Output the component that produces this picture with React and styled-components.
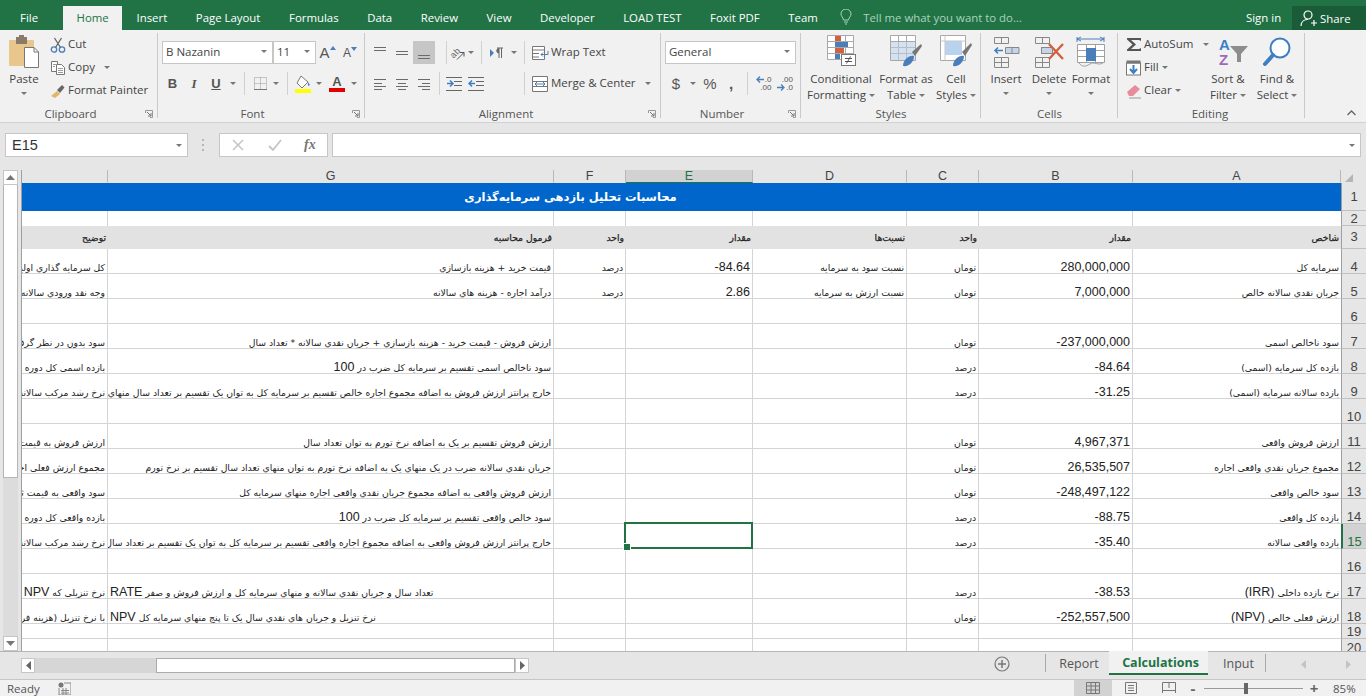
import React from "react"
import styled, { createGlobalStyle } from "styled-components"

const GREEN = "#217346"
const UI_FONT = `"Open Sans", "Noto Sans", sans-serif`
const GRID_LINE = "#d4d4d4"
const COLUMNS = "86px 446px 72px 127px 154px 72px 154px 208px 25px"

const GlobalStyle = createGlobalStyle`
    html, body { margin: 0; padding: 0; background: #e6e6e6; }
    * { box-sizing: border-box; }
`

const Page = styled.div`
    width: 1366px;
    height: 696px;
    overflow: hidden;
    display: flex;
    flex-direction: column;
    font-family: ${UI_FONT};
    color: #444;
`

/* title tabs */
const TabBar = styled.div`
    height: 30px;
    flex: none;
    background: ${GREEN};
    display: flex;
    align-items: flex-end;
    color: #fff;
    font-size: 11.4px;
`
const FileTab = styled.div`
    width: 58px;
    height: 24px;
    padding-left: 20px;
    line-height: 23px;
    margin-right: 5px;
`
const MenuTab = styled.div`
    height: 24px;
    line-height: 23px;
    padding: 0 ${p => p.$pad || 14.3}px;
    white-space: nowrap;
    background: ${p => (p.$active ? "#f1f1f1" : "transparent")};
    color: ${p => (p.$active ? GREEN : "#fff")};
`
const TellMe = styled.div`
    display: flex;
    align-items: center;
    gap: 11px;
    height: 24px;
    margin-left: 8px;
    padding-bottom: 2px;
    color: #a9d3bb;
    white-space: nowrap;
    flex: 1;
`
const SignIn = styled.div`
    height: 24px;
    line-height: 23px;
    width: 46px;
`
const ShareBtn = styled.div`
    width: 74px;
    height: 24px;
    display: flex;
    align-items: center;
    gap: 3px;
    padding-left: 8px;
    background: #1a5c38;
`

/* ribbon */
const Ribbon = styled.div`
    height: 93px;
    flex: none;
    display: flex;
    background: #f1f1f1;
    border-bottom: 1px solid #d2d2d2;
`
const Group = styled.div`
    width: ${p => p.$w}px;
    flex: none;
    display: flex;
    flex-direction: column;
    position: relative;
    &::after {
        content: "";
        position: absolute;
        right: 0;
        top: 3px;
        bottom: 4px;
        width: 1px;
        background: #c9c9c9;
    }
`
const GroupBody = styled.div`
    height: 76px;
    display: flex;
    padding-top: ${p => p.$top || 0}px;
    padding-left: ${p => p.$left || 0}px;
`
const GroupLabel = styled.div`
    height: 16px;
    line-height: 15px;
    text-align: center;
    font-size: 11.5px;
    color: #555;
    padding-right: ${p => p.$shift || 0}px;
    position: relative;
`
const Launcher = styled.svg`
    position: absolute;
    right: 5px;
    top: 4px;
    width: 8px;
    height: 8px;
`
const RibbonEnd = styled.div`
    flex: 1;
    display: flex;
    align-items: flex-end;
    justify-content: flex-end;
    padding: 0 10px 6px 0;
`
const Stack = styled.div`
    display: flex;
    flex-direction: column;
    width: ${p => (p.$w ? `${p.$w}px` : "auto")};
    gap: ${p => p.$gap || 0}px;
    padding-top: ${p => p.$top || 0}px;
`
const ToolRow = styled.div`
    display: flex;
    align-items: center;
    height: 23px;
    font-size: 11.5px;
    white-space: nowrap;
`
const ToolText = styled.span`
    margin-bottom: 2px;
`
const Tool = styled.div`
    width: ${p => p.$w}px;
    height: 23px;
    flex: none;
    display: flex;
    align-items: center;
    justify-content: center;
    background: ${p => (p.$on ? "#c6c6c6" : "transparent")};
`
const Glyph = styled.span`
    font-family: ${p => (p.$serif ? `"Liberation Serif", serif` : `"Liberation Sans", sans-serif`)};
    font-size: ${p => p.$size || 13}px;
    line-height: ${p => p.$size || 13}px;
    font-weight: ${p => (p.$bold ? 700 : 400)};
    font-style: ${p => (p.$italic ? "italic" : "normal")};
    text-decoration: ${p => (p.$under ? "underline" : "none")};
    color: ${p => p.$color || "#555"};
`
const Sep = styled.div`
    width: ${p => p.$w}px;
    margin-left: ${p => p.$ml || 0}px;
    height: 23px;
    flex: none;
    display: flex;
    justify-content: center;
    &::before {
        content: "";
        width: 1px;
        background: #d0d0d0;
    }
`
const Spacer = styled.div`
    width: ${p => p.$w}px;
    flex: none;
`
const CaretMark = styled.i`
    display: inline-block;
    width: 0;
    height: 0;
    border-left: 3px solid transparent;
    border-right: 3px solid transparent;
    border-top: 3px solid #777;
    margin-left: ${p => p.$ml || 0}px;
    margin-top: ${p => p.$mt || 0}px;
    vertical-align: middle;
`
const SelectBox = styled.div`
    width: ${p => p.$w}px;
    height: 23px;
    flex: none;
    background: #fff;
    border: 1px solid #c6c6c6;
    display: flex;
    align-items: center;
    justify-content: space-between;
    padding: 0 5px 2px 3px;
    font-size: 11.5px;
    color: #444;
`
const LargeBtn = styled.div`
    width: ${p => p.$w}px;
    flex: none;
    display: flex;
    flex-direction: column;
    align-items: center;
    padding-top: 3px;
    font-size: 11.5px;
    line-height: 16px;
    white-space: nowrap;
`
const LargeIcon = styled.div`
    height: 38px;
    display: flex;
    align-items: center;
    justify-content: center;
`
const DecimalWrap = styled.div`
    display: flex;
    flex-direction: column;
    align-items: flex-end;
    font-family: "Liberation Sans", sans-serif;
    font-size: 8px;
    line-height: 8px;
    color: #555;
`
const DecimalLine = styled.div`
    display: flex;
    align-items: center;
    gap: 1px;
`
const FontColorWrap = styled.span`
    display: flex;
    flex-direction: column;
    align-items: center;
`

/* formula bar */
const FormulaBar = styled.div`
    height: 47px;
    flex: none;
    background: #e6e6e6;
    display: flex;
    padding: 10px 5px 0;
`
const NameBox = styled.div`
    width: 183px;
    height: 24px;
    background: #fff;
    border: 1px solid #c6c6c6;
    display: flex;
    align-items: center;
    justify-content: space-between;
    padding: 0 5px 0 6px;
    font-family: "Liberation Sans", sans-serif;
    font-size: 14.5px;
    color: #333;
`
const Grip = styled.div`
    width: 31px;
    height: 24px;
    display: flex;
    align-items: center;
    justify-content: center;
`
const FxBox = styled.div`
    width: 109px;
    height: 24px;
    background: #fff;
    border: 1px solid #c6c6c6;
    display: flex;
    align-items: center;
    justify-content: space-around;
    margin-right: 4px;
`
const FormulaInput = styled.div`
    flex: 1;
    height: 24px;
    background: #fff;
    border: 1px solid #c6c6c6;
    display: flex;
    align-items: center;
    justify-content: flex-end;
    padding-right: 5px;
`

/* sheet */
const SheetArea = styled.div`
    height: 482px;
    flex: none;
    display: flex;
    border-bottom: 1px solid #b5b5b5;
`
const VScroll = styled.div`
    width: 22px;
    flex: none;
    padding: 0 3px;
    display: flex;
    flex-direction: column;
    background: #e6e6e6;
    border-right: 1px solid #9f9f9f;
`
const ScrollArrow = styled.div`
    height: ${p => p.$h || 15}px;
    width: ${p => p.$w || "auto"};
    flex: none;
    background: #fff;
    border: 1px solid #c6c6c6;
    display: flex;
    align-items: center;
    justify-content: center;
`
const VThumb = styled.div`
    height: 293px;
    flex: none;
    background: #fff;
    border: 1px solid #b5b5b5;
    border-top: 0;
`
const VTrack = styled.div`
    flex: 1;
    background: #dcdcdc;
`
const SheetGrid = styled.div`
    flex: 1;
    min-width: 0;
    display: flex;
    flex-direction: column;
    overflow: hidden;
    background: #fff;
`
const HeadRow = styled.div`
    height: 13px;
    flex: none;
    display: grid;
    grid-template-columns: ${COLUMNS};
    background: #e6e6e6;
`
const ColHead = styled.div`
    height: 13px;
    line-height: 13px;
    text-align: center;
    overflow: hidden;
    font-family: "Liberation Sans", sans-serif;
    font-size: 12.5px;
    color: ${p => (p.$on ? GREEN : "#444")};
    background: ${p => (p.$on ? "#d2d2d2" : "transparent")};
    border-right: 1px solid #b9b9b9;
    border-bottom: 1px solid ${p => (p.$on ? GREEN : "transparent")};
`
const Corner = styled.div`
    display: flex;
    align-items: flex-end;
    padding: 0 0 1px 4px;
    background: #e6e6e6;
`
const Row = styled.div`
    height: ${p => p.$h}px;
    flex: none;
    display: grid;
    grid-template-columns: ${COLUMNS};
    background: ${p => p.$bg || "#fff"};
`
const Cell = styled.div`
    min-width: 0;
    overflow: hidden;
    white-space: nowrap;
    display: flex;
    align-items: ${p => (p.$center ? "center" : "flex-end")};
    justify-content: flex-end;
    direction: ltr;
    padding: 0 2px 0 2px;
    font-family: "Liberation Sans", "DejaVu Sans", sans-serif;
    font-size: 12.5px;
    line-height: 11px;
    color: #222;
    border-bottom: ${p => (p.$plain || p.$noLine ? "0" : `1px solid ${GRID_LINE}`)};
    border-right: ${p => (p.$plain ? "0" : `1px solid ${GRID_LINE}`)};
    &:nth-child(8) {
        border-right: 0;
    }
`
const Farsi = styled.span`
    display: block;
    direction: ${p => (p.$ltr ? "ltr" : "rtl")};
    flex: none;
    font-family: "DejaVu Sans", sans-serif;
    font-size: 9.25px;
    -webkit-text-stroke: ${p => (p.$strong ? "0.25px" : "0")};
    margin-right: ${p => (p.$ltr ? "auto" : "0")};
`
const Latin = styled.span`
    font-family: "Liberation Sans", sans-serif;
    font-size: 12.5px;
`
const SelectedCell = styled(Cell)`
    position: relative;
    overflow: visible;
    &::after {
        content: "";
        position: absolute;
        left: -2px;
        top: -2px;
        right: -1px;
        bottom: -1px;
        border: 2px solid ${GREEN};
        z-index: 2;
    }
    &::before {
        content: "";
        position: absolute;
        left: -3px;
        bottom: -3px;
        width: 6px;
        height: 6px;
        background: ${GREEN};
        border: 1px solid #fff;
        z-index: 3;
    }
`
const RowHead = styled.div`
    display: flex;
    align-items: ${p => (p.$center ? "center" : "flex-end")};
    justify-content: center;
    font-family: "Liberation Sans", sans-serif;
    font-size: 13px;
    line-height: 12px;
    overflow: hidden;
    color: ${p => (p.$on ? GREEN : "#444")};
    background: ${p => (p.$on ? "#d2d2d2" : "#e6e6e6")};
    border-left: ${p => (p.$on ? `2px solid ${GREEN}` : "1px solid #9f9f9f")};
    border-bottom: 1px solid #c0c0c0;
`
const TitleRow = styled.div`
    height: 28px;
    flex: none;
    display: grid;
    grid-template-columns: 1fr 25px;
`
const TitleCell = styled.div`
    background: #0066cc;
    color: #fff;
    display: flex;
    align-items: center;
    justify-content: center;
    padding: 0 222px 0 0;
    direction: rtl;
    font-family: "DejaVu Sans", sans-serif;
    font-size: 11.5px;
    font-weight: 700;
`

/* sheet tabs */
const SheetBar = styled.div`
    height: 28px;
    flex: none;
    display: flex;
    background: #e6e6e6;
    border-bottom: 1px solid #c6c6c6;
    font-size: 12.5px;
    color: #555;
`
const HScroll = styled.div`
    width: 508px;
    height: 15px;
    margin: 6px 0 0 21px;
    display: flex;
    flex: none;
`
const HTrack = styled.div`
    width: 121px;
    background: #d6d6d6;
`
const HThumb = styled.div`
    width: 359px;
    background: #fff;
    border: 1px solid #ababab;
`
const AddSheet = styled.div`
    width: 16px;
    height: 16px;
    margin: 4px 0 0 465px;
    flex: none;
`
const TabSep = styled.div`
    width: 1px;
    height: 18px;
    margin: 2px 0 0 ${p => p.$ml || 0}px;
    background: #a8a8a8;
    flex: none;
`
const SheetTab = styled.div`
    width: ${p => p.$w}px;
    height: 24px;
    line-height: 23px;
    text-align: center;
    flex: none;
    padding-left: ${p => p.$shift || 0}px;
    font-weight: ${p => (p.$active ? 700 : 400)};
    color: ${p => (p.$active ? GREEN : "#555")};
    background: ${p => (p.$active ? "#f1f1f1" : "transparent")};
    border-bottom: ${p => (p.$active ? `2px solid ${GREEN}` : "0")};
    margin-top: ${p => (p.$active ? -1 : 0)}px;
`
const TabNav = styled.div`
    margin-left: 35px;
    width: 50px;
    display: flex;
    justify-content: space-between;
    padding-top: 8px;
    flex: none;
`

/* status bar */
const StatusBar = styled.div`
    height: 16px;
    flex: none;
    display: flex;
    align-items: center;
    background: #f1f1f1;
    font-size: 11.5px;
    color: #555;
    padding-left: 7px;
`
const ReadyText = styled.div`
    width: 51px;
`
const ViewBtn = styled.div`
    width: ${p => p.$w}px;
    height: 16px;
    flex: none;
    display: flex;
    align-items: center;
    justify-content: center;
    background: ${p => (p.$on ? "#d2d2d2" : "transparent")};
`
const ZoomSlider = styled.div`
    width: 99px;
    height: 1px;
    margin: 0 6px;
    flex: none;
    background: #9a9a9a;
    display: flex;
    align-items: center;
    padding-left: 40px;
`
const ZoomThumb = styled.div`
    width: 4px;
    height: 11px;
    background: #666;
    flex: none;
`
const ZoomSign = styled.div`
    width: 10px;
    text-align: center;
    font-size: 15px;
    font-weight: 700;
    color: #666;
    line-height: 14px;
    flex: none;
`
const ZoomValue = styled.div`
    margin-left: 14px;
    color: #555;
`

const Ico = ({ w, h, children }) => (
    <svg width={w} height={h} viewBox={`0 0 ${w} ${h}`} fill="none">{children}</svg>
)

const Lines = ({ rows, color = "#6b6b6b" }) => (
    <Ico w={16} h={16}>
        {rows.map(([x1, x2, y], i) => (
            <path key={i} d={`M${x1} ${y}.5H${x2}`} stroke={color} />
        ))}
    </Ico>
)

const Launch = () => (
    <Launcher viewBox="0 0 8 8" fill="none">
        <path d="M.5 3V.5H7.5V7.5H5" stroke="#999" />
        <path d="M2 2L6 6M6 3V6H3" stroke="#777" />
    </Launcher>
)

const PasteIcon = () => (
    <Ico w={32} h={35}>
        <rect x="1" y="5" width="25" height="26" rx="1" fill="#e8c68c" />
        <rect x="8" y="2" width="11" height="7" fill="#8a7b68" />
        <rect x="11" y="0" width="5" height="4" fill="#8a7b68" />
        <path d="M16.5 12.5H26L30.5 17V32.5H16.5Z" fill="#fff" stroke="#777" />
        <path d="M26 12.5V17H30.5" stroke="#777" />
    </Ico>
)
const CutIcon = () => (
    <Ico w={16} h={16}>
        <circle cx="4" cy="12.5" r="2.7" stroke="#4a7ebb" strokeWidth="1.3" />
        <circle cx="12" cy="12.5" r="2.7" stroke="#4a7ebb" strokeWidth="1.3" />
        <path d="M5.5 10.5L11.5 1M10.5 10.5L4.5 1" stroke="#666" strokeWidth="1.3" />
    </Ico>
)
const CopyIcon = () => (
    <Ico w={16} h={16}>
        <path d="M1.5 1.5H7.5V11.5H1.5Z" fill="#fff" stroke="#777" />
        <path d="M6.5 4.5H11.5L14.5 7.5V14.5H6.5Z" fill="#fff" stroke="#777" />
        <path d="M8 8.5H13M8 10.5H13M8 12.5H13M3 4.5H6M3 6.5H5" stroke="#999" />
    </Ico>
)
const PainterIcon = () => (
    <Ico w={16} h={16}>
        <path d="M1 13L7 8L10 11L5 15Z" fill="#e3b566" />
        <path d="M7 7L12 2L14.5 4.5L10 10Z" fill="#666" />
    </Ico>
)
const GrowIcon = ({ size, up }) => (
    <span>
        <Glyph $size={size}>A</Glyph>
        <svg width="6" height="4" viewBox="0 0 6 4" style={{ verticalAlign: size > 13 ? 8 : 6 }}>
            <path d={up ? "M0 4L3 0L6 4Z" : "M0 0L3 4L6 0Z"} fill="#4a7ebb" />
        </svg>
    </span>
)
const BorderIcon = () => (
    <Ico w={15} h={15}>
        <path d="M1.5 1.5H13.5V13.5H1.5ZM7.5 1.5V13.5M1.5 7.5H13.5" stroke="#999" strokeDasharray="1 1" />
        <path d="M1 13.5H14" stroke="#777" />
    </Ico>
)
const FillIcon = () => (
    <Ico w={18} h={18}>
        <path d="M7 1L14 7L8 13L3 8Z" fill="#fff" stroke="#777" />
        <path d="M14 7L16 10L14 11Z" fill="#4a7ebb" />
        <rect x="1" y="14" width="16" height="4" fill="#ffff00" />
    </Ico>
)
const FontColorIcon = () => (
    <FontColorWrap>
        <Glyph $size={13} $bold>A</Glyph>
        <svg width="16" height="4"><rect width="16" height="4" fill="#e00000" /></svg>
    </FontColorWrap>
)
const OrientIcon = () => (
    <Ico w={16} h={16}>
        <text x="0" y="11" fontFamily="Liberation Sans, sans-serif" fontSize="9" fill="#666" transform="rotate(-45 5 8)">ab</text>
        <path d="M7 14.5L14 7.5M14 7.5V11.5M14 7.5H10" stroke="#555" />
    </Ico>
)
const RtlIcon = () => (
    <Ico w={16} h={14}>
        <path d="M1 3L5 7L1 11Z" fill="#4a7ebb" />
        <path d="M8 2H14M10 2V12M12.5 2V12" stroke="#666" />
        <path d="M10 2.5A2 2 0 0 0 10 7" fill="#666" stroke="#666" />
    </Ico>
)
const IndentIcon = ({ out }) => (
    <Ico w={16} h={14}>
        <path d="M0 .5H16M8 4.5H16M8 8.5H16M0 13.5H16" stroke="#666" />
        <path d={out ? "M7 6.5H1M4 3.5L1 6.5L4 9.5" : "M1 6.5H7M4 3.5L7 6.5L4 9.5"} stroke="#3c7fc4" strokeWidth="1.5" />
    </Ico>
)
const WrapIcon = () => (
    <Ico w={18} h={16}>
        <path d="M1.5 1.5H13.5V14.5H1.5Z" fill="#fff" stroke="#777" />
        <path d="M1 5H13M1 8.5H8M1 12H8" stroke="#777" />
        <path d="M17 6V9.5H10M12 7.5L10 9.5L12 11.5" stroke="#4a7ebb" />
    </Ico>
)
const MergeIcon = () => (
    <Ico w={16} h={16}>
        <path d="M.5 .5H15.5V15.5H.5ZM.5 5.5H15.5M.5 10.5H15.5" stroke="#777" fill="#fff" />
        <path d="M3 8H13M5 6L3 8L5 10M11 6L13 8L11 10" stroke="#4a7ebb" />
    </Ico>
)
const DecArrow = ({ left }) => (
    <svg width="8" height="7" viewBox="0 0 8 7" fill="none">
        <path d={left ? "M8 3.5H1M4 .5L1 3.5L4 6.5" : "M0 3.5H7M4 .5L7 3.5L4 6.5"} stroke="#4a7ebb" strokeWidth="1.3" />
    </svg>
)
const DecimalMore = () => (
    <DecimalWrap>
        <DecimalLine><DecArrow left />.0</DecimalLine>
        <DecimalLine>.00</DecimalLine>
    </DecimalWrap>
)
const DecimalLess = () => (
    <DecimalWrap>
        <DecimalLine>.00</DecimalLine>
        <DecimalLine><DecArrow />.0</DecimalLine>
    </DecimalWrap>
)
const CondIcon = () => (
    <Ico w={30} h={36}>
        <path d="M1.5 1.5H27.5V25.5H1.5ZM10.5 1.5V25.5M19.5 1.5V25.5M1.5 7.5H27.5M1.5 13.5H27.5M1.5 19.5H27.5" stroke="#a8a8a8" fill="#fff" />
        <rect x="9" y="2" width="6" height="5" fill="#d2603f" />
        <rect x="9" y="8" width="13" height="5" fill="#4a7ebb" />
        <rect x="9" y="14" width="9" height="5" fill="#d2603f" />
        <rect x="9" y="20" width="5" height="5" fill="#4a7ebb" />
        <rect x="15.5" y="20.5" width="14" height="11" fill="#fff" stroke="#777" />
        <path d="M19 24.5H26M19 27.5H26M24.5 22.5L20.5 29.5" stroke="#555" />
    </Ico>
)
const TableIcon = () => (
    <Ico w={34} h={36}>
        <path d="M1.5 1.5H26.5V26.5H1.5ZM9.5 1.5V26.5M17.5 1.5V26.5M1.5 7.5H26.5M1.5 13.5H26.5M1.5 19.5H26.5" stroke="#a8a8a8" fill="#fff" />
        <rect x="2" y="8" width="24" height="18" fill="#b9cde5" opacity=".6" />
        <path d="M23 18L32 10L33 12L26 22Z" fill="#777" />
        <path d="M14 32C14 26 20 21 25 22C25 28 20 33 14 32Z" fill="#4a7ebb" />
    </Ico>
)
const StylesIcon = () => (
    <Ico w={34} h={36}>
        <path d="M1.5 1.5H26.5V26.5H1.5Z" stroke="#a8a8a8" fill="#fff" />
        <rect x="6" y="7" width="17" height="14" fill="#b9d3ee" />
        <path d="M1.5 7H26.5M6 1.5V26.5" stroke="#c8c8c8" />
        <path d="M23 18L32 9L33 11L26 22Z" fill="#777" />
        <path d="M14 32C14 26 20 21 25 22C25 28 20 33 14 32Z" fill="#4a7ebb" />
    </Ico>
)
const CellsInsertIcon = () => (
    <Ico w={28} h={32}>
        <path d="M2.5 1.5H16.5V7.5H2.5ZM9.5 1.5V7.5M2.5 21.5H16.5V31.5H2.5ZM9.5 21.5V31.5M2.5 26.5H16.5" stroke="#888" />
        <path d="M13.5 11.5H27V17.5H13.5ZM20 11.5V17.5" stroke="#888" fill="#c5d4e8" />
        <path d="M11 14.5H3M6 11.5L3 14.5L6 17.5" stroke="#3c7fc4" strokeWidth="1.5" />
    </Ico>
)
const CellsDeleteIcon = () => (
    <Ico w={32} h={32}>
        <path d="M2.5 1.5H16.5V7.5H2.5ZM9.5 1.5V7.5M2.5 21.5H16.5V31.5H2.5ZM9.5 21.5V31.5M2.5 26.5H16.5" stroke="#888" />
        <rect x="8.5" y="11.5" width="11" height="6" stroke="#888" fill="#c5d4e8" />
        <path d="M16 8L30 23M30 8L16 23" stroke="#d2603f" strokeWidth="2.4" />
    </Ico>
)
const CellsFormatIcon = () => (
    <Ico w={30} h={32}>
        <path d="M1 3H28M1 1V6M28 1V6M5 1L1 3L5 5M24 1L28 3L24 5" stroke="#4a7ebb" />
        <path d="M1.5 8.5H28.5V26.5H1.5ZM10.5 8.5V26.5M19.5 8.5V26.5M1.5 14.5H28.5M1.5 20.5H28.5" stroke="#a0a0a0" fill="#fff" />
        <rect x="10" y="12" width="10" height="13" fill="#4a7ebb" />
        <path d="M3 27C6 31 9 31 14 28C18 25 22 30 27 27" stroke="#a0a0a0" />
    </Ico>
)
const SigmaIcon = () => (
    <Ico w={16} h={15}>
        <path d="M1 1H15V4L13 3H5L10 7.5L5 12H13L15 11V14H1V12.5L6.5 7.5L1 2.5Z" fill="#555" />
    </Ico>
)
const FillDownIcon = () => (
    <Ico w={16} h={16}>
        <rect x=".5" y="3" width="14" height="12" fill="#fff" stroke="#777" />
        <rect x=".5" y=".5" width="14" height="3" fill="#777" />
        <path d="M7.5 5V12M4 9L7.5 13L11 9" stroke="#3c7fc4" strokeWidth="2" />
    </Ico>
)
const EraserIcon = () => (
    <Ico w={16} h={16}>
        <path d="M1 9L9 2L14 6L7 13H3Z" fill="#e88b9a" />
        <path d="M3 15H15" stroke="#999" />
    </Ico>
)
const SortIcon = () => (
    <Ico w={42} h={30}>
        <text x="12" y="13" fontFamily="Liberation Sans, sans-serif" fontWeight="700" fontSize="15" fill="#3c7fc4">A</text>
        <text x="12" y="28" fontFamily="Liberation Sans, sans-serif" fontWeight="700" fontSize="15" fill="#9e6ab8">Z</text>
        <path d="M23 9H41L34 17V25H30V17Z" fill="#8d8d8d" />
    </Ico>
)
const FindIcon = () => (
    <Ico w={30} h={32}>
        <circle cx="18" cy="12" r="9.5" stroke="#3c7fc4" strokeWidth="2" fill="#fff" />
        <path d="M11 19L3 28" stroke="#3c7fc4" strokeWidth="4" strokeLinecap="round" />
    </Ico>
)
const BulbIcon = () => (
    <Ico w={12} h={16}>
        <path d="M3.5 11C3 8 1 7.5 1 5A5 5 0 0 1 11 5C11 7.5 9 8 8.5 11ZM4 13H8M5 15H7" stroke="#a9d3bb" />
    </Ico>
)
const ShareIcon = () => (
    <Ico w={17} h={17}>
        <circle cx="8" cy="5" r="4" stroke="#fff" strokeWidth="1.2" />
        <path d="M1 16C1 11 5 9.5 8 9.5M11 13H17M14 10V16" stroke="#fff" strokeWidth="1.2" />
    </Ico>
)
const ArrowUp = () => <Ico w={9} h={5}><path d="M0 5L4.5 0L9 5Z" fill="#777" /></Ico>
const ArrowDown = () => <Ico w={9} h={5}><path d="M0 0L4.5 5L9 0Z" fill="#777" /></Ico>
const ArrowSide = ({ left, color = "#666" }) => (
    <Ico w={5} h={9}><path d={left ? "M5 0L0 4.5L5 9Z" : "M0 0L5 4.5L0 9Z"} fill={color} /></Ico>
)

const TABS = ["Insert", "Page Layout", "Formulas", "Data", "Review", "View", "Developer", "LOAD TEST", "Foxit PDF", "Team"]
const HEADERS = ["", "G", "F", "E", "D", "C", "B", "A"]

const latin = t => <Latin>{t}</Latin>

// order of a row: H G F E D C B A, a cell is text (farsi) or { n } (a number)
const ROWS = [
    { n: 2, h: 15, noLine: true, cells: [] },
    { n: 3, h: 23, band: true, cells: ["توضیح", "فرمول محاسبه", "واحد", "مقدار", "نسبت‌ها", "واحد", "مقدار", "شاخص"] },
    { n: 4, h: 25, cells: ["کل سرمایه گذاري اولیه", "قیمت خرید + هزینه بازسازي", "درصد", { n: "-84.64" }, "نسبت سود به سرمایه", "تومان", { n: "280,000,000" }, "سرمایه کل"] },
    { n: 5, h: 25, cells: ["وجه نقد ورودي سالانه", "درآمد اجاره - هزینه هاي سالانه", "درصد", { n: "2.86" }, "نسبت ارزش به سرمایه", "تومان", { n: "7,000,000" }, "جریان نقدي سالانه خالص"] },
    { n: 6, h: 25, cells: [] },
    { n: 7, h: 25, cells: ["سود بدون در نظر گرفتن", "ارزش فروش - قیمت خرید - هزینه بازسازي + جریان نقدي سالانه * تعداد سال", "", "", "", "تومان", { n: "-237,000,000" }, "سود ناخالص اسمی"] },
    { n: 8, h: 25, cells: ["بازده اسمی کل دوره", <>سود ناخالص اسمی تقسیم بر سرمایه کل ضرب در {latin("100")}</>, "", "", "", "درصد", { n: "-84.64" }, "بازده کل سرمایه (اسمی)"] },
    { n: 9, h: 25, cells: ["نرخ رشد مرکب سالانه", "خارج پرانتز ارزش فروش به اضافه مجموع اجاره خالص تقسیم بر سرمایه کل به توان یک تقسیم بر تعداد سال منهاي یک", "", "", "", "درصد", { n: "-31.25" }, "بازده سالانه سرمایه (اسمی)"] },
    { n: 10, h: 25, cells: [] },
    { n: 11, h: 25, cells: ["ارزش فروش به قیمت ثابت", "ارزش فروش تقسیم بر یک به اضافه نرخ تورم به توان تعداد سال", "", "", "", "تومان", { n: "4,967,371" }, "ارزش فروش واقعی"] },
    { n: 12, h: 25, cells: ["مجموع ارزش فعلی اجاره", "جریان نقدي سالانه ضرب در یک منهاي یک به اضافه نرخ تورم به توان منهاي تعداد سال تقسیم بر نرخ تورم", "", "", "", "تومان", { n: "26,535,507" }, "مجموع جریان نقدي واقعی اجاره"] },
    { n: 13, h: 25, cells: ["سود واقعی به قیمت ثابت", "ارزش فروش واقعی به اضافه مجموع جریان نقدي واقعی اجاره منهاي سرمایه کل", "", "", "", "تومان", { n: "-248,497,122" }, "سود خالص واقعی"] },
    { n: 14, h: 25, cells: ["بازده واقعی کل دوره (درصد)", <>سود خالص واقعی تقسیم بر سرمایه کل ضرب در {latin("100")}</>, "", "", "", "درصد", { n: "-88.75" }, "بازده کل واقعی"] },
    { n: 15, h: 25, selected: true, cells: ["نرخ رشد مرکب سالانه", "خارج پرانتز ارزش فروش واقعی به اضافه مجموع اجاره واقعی تقسیم بر سرمایه کل به توان یک تقسیم بر تعداد سال", "", "", "", "درصد", { n: "-35.40" }, "بازده واقعی سالانه"] },
    { n: 16, h: 25, cells: [] },
    { n: 17, h: 25, cells: [<>نرخ تنزیلی که {latin("NPV")} را صفر می‌کند</>, { ltr: <>{latin("RATE")} تعداد سال و جریان نقدي سالانه و منهاي سرمایه کل و ارزش فروش و صفر</> }, "", "", "", "درصد", { n: "-38.53" }, <>نرخ بازده داخلی {latin("(IRR)")}</>] },
    { n: 18, h: 25, cells: ["با نرخ تنزیل (هزینه فرصت)", { ltr: <>{latin("NPV")} نرخ تنزیل و جریان هاي نقدي سال یک تا پنج منهاي سرمایه کل</> }, "", "", "", "تومان", { n: "-252,557,500" }, <>ارزش فعلی خالص {latin("(NPV)")}</>] },
    { n: 19, h: 15, cells: [] },
    { n: 20, h: 16, cells: [] },
]

const cellContent = (cell, band) => {
    if (!cell) return null
    if (cell.n) return cell.n
    if (cell.ltr) return <Farsi $ltr>{cell.ltr}</Farsi>
    return <Farsi $strong={band}>{cell}</Farsi>
}

const SheetRow = ({ row }) => (
    <Row $h={row.h} $bg={row.band ? "#e2e2e2" : "#fff"}>
        {HEADERS.map((col, i) => {
            const Kind = row.selected && col === "E" ? SelectedCell : Cell
            return (
                <Kind key={col || "H"} $plain={row.band} $center={row.band} $noLine={row.noLine}>
                    {cellContent(row.cells[i], row.band)}
                </Kind>
            )
        })}
        <RowHead $on={row.selected} $center={row.band}>{row.n}</RowHead>
    </Row>
)

const RibbonTabs = () => (
    <TabBar>
        <FileTab>File</FileTab>
        <MenuTab $active $pad={13.5}>Home</MenuTab>
        {TABS.map(t => <MenuTab key={t}>{t}</MenuTab>)}
        <TellMe><BulbIcon />Tell me what you want to do...</TellMe>
        <SignIn>Sign in</SignIn>
        <ShareBtn><ShareIcon />Share</ShareBtn>
    </TabBar>
)

const Home = () => (
    <Ribbon>
        <Group $w={158}>
            <GroupBody>
                <LargeBtn $w={48}>
                    <LargeIcon><PasteIcon /></LargeIcon>
                    Paste
                    <CaretMark $mt={5} />
                </LargeBtn>
                <Stack $top={3}>
                    <ToolRow><Tool $w={20}><CutIcon /></Tool><ToolText>Cut</ToolText></ToolRow>
                    <ToolRow><Tool $w={20}><CopyIcon /></Tool><ToolText>Copy</ToolText><CaretMark $ml={9} /></ToolRow>
                    <ToolRow><Tool $w={20}><PainterIcon /></Tool><ToolText>Format Painter</ToolText></ToolRow>
                </Stack>
            </GroupBody>
            <GroupLabel $shift={17}>Clipboard<Launch /></GroupLabel>
        </Group>

        <Group $w={207}>
            <GroupBody $top={11} $left={4}>
                <Stack $gap={8}>
                    <ToolRow>
                        <SelectBox $w={111}>B Nazanin<CaretMark /></SelectBox>
                        <SelectBox $w={43}>11<CaretMark /></SelectBox>
                        <Tool $w={23}><GrowIcon size={15} up /></Tool>
                        <Tool $w={22}><GrowIcon size={12} /></Tool>
                    </ToolRow>
                    <ToolRow>
                        <Tool $w={21}><Glyph $bold>B</Glyph></Tool>
                        <Tool $w={22}><Glyph $italic $serif $bold>I</Glyph></Tool>
                        <Tool $w={22}><Glyph $bold $under>U</Glyph></Tool>
                        <Tool $w={12}><CaretMark /></Tool>
                        <Sep $w={10} />
                        <Tool $w={22}><BorderIcon /></Tool>
                        <Tool $w={10}><CaretMark /></Tool>
                        <Sep $w={12} />
                        <Tool $w={20}><FillIcon /></Tool>
                        <Tool $w={12}><CaretMark /></Tool>
                        <Tool $w={24}><FontColorIcon /></Tool>
                        <Tool $w={10}><CaretMark /></Tool>
                    </ToolRow>
                </Stack>
            </GroupBody>
            <GroupLabel $shift={18}>Font<Launch /></GroupLabel>
        </Group>

        <Group $w={296}>
            <GroupBody $top={11} $left={4}>
                <Stack $gap={8}>
                    <ToolRow>
                        <Tool $w={22}><Lines rows={[[2, 14, 2], [2, 14, 5]]} /></Tool>
                        <Tool $w={22}><Lines rows={[[2, 14, 6], [2, 14, 9]]} /></Tool>
                        <Tool $w={22} $on><Lines rows={[[2, 14, 10], [2, 14, 13]]} /></Tool>
                        <Sep $w={8} $ml={7} />
                        <Tool $w={16}><OrientIcon /></Tool>
                        <Tool $w={10}><CaretMark /></Tool>
                        <Sep $w={10} />
                        <Tool $w={22}><RtlIcon /></Tool>
                        <Tool $w={12}><CaretMark /></Tool>
                        <Sep $w={8} />
                        <Tool $w={23}><WrapIcon /></Tool>
                        <ToolText>Wrap Text</ToolText>
                    </ToolRow>
                    <ToolRow>
                        <Tool $w={22}><Lines rows={[[2, 14, 3], [2, 10, 7], [2, 14, 10], [2, 10, 13]]} /></Tool>
                        <Tool $w={22}><Lines rows={[[2, 14, 3], [4, 12, 7], [2, 14, 10], [4, 12, 13]]} /></Tool>
                        <Tool $w={22}><Lines rows={[[2, 14, 3], [6, 14, 7], [2, 14, 10], [6, 14, 13]]} /></Tool>
                        <Sep $w={8} />
                        <Tool $w={22}><IndentIcon /></Tool>
                        <Tool $w={22}><IndentIcon out /></Tool>
                        <Spacer $w={33} />
                        <Sep $w={8} />
                        <Tool $w={23}><MergeIcon /></Tool>
                        <ToolText>Merge &amp; Center</ToolText>
                        <CaretMark $ml={9} />
                    </ToolRow>
                </Stack>
            </GroupBody>
            <GroupLabel $shift={14}>Alignment<Launch /></GroupLabel>
        </Group>

        <Group $w={140}>
            <GroupBody $top={11} $left={4}>
                <Stack $gap={8}>
                    <ToolRow><SelectBox $w={131}>General<CaretMark /></SelectBox></ToolRow>
                    <ToolRow>
                        <Tool $w={22}><Glyph $size={15}>$</Glyph></Tool>
                        <Tool $w={12}><CaretMark /></Tool>
                        <Tool $w={22}><Glyph $size={15}>%</Glyph></Tool>
                        <Tool $w={20}><Glyph $size={15} $bold>,</Glyph></Tool>
                        <Sep $w={12} />
                        <Tool $w={21}><DecimalMore /></Tool>
                        <Tool $w={22}><DecimalLess /></Tool>
                    </ToolRow>
                </Stack>
            </GroupBody>
            <GroupLabel $shift={18}>Number<Launch /></GroupLabel>
        </Group>

        <Group $w={180}>
            <GroupBody>
                <LargeBtn $w={80}>
                    <LargeIcon><CondIcon /></LargeIcon>
                    Conditional
                    <span>Formatting<CaretMark $ml={3} /></span>
                </LargeBtn>
                <LargeBtn $w={50}>
                    <LargeIcon><TableIcon /></LargeIcon>
                    Format as
                    <span>Table<CaretMark $ml={3} /></span>
                </LargeBtn>
                <LargeBtn $w={50}>
                    <LargeIcon><StylesIcon /></LargeIcon>
                    Cell
                    <span>Styles<CaretMark $ml={3} /></span>
                </LargeBtn>
            </GroupBody>
            <GroupLabel>Styles</GroupLabel>
        </Group>

        <Group $w={137}>
            <GroupBody>
                <LargeBtn $w={50}>
                    <LargeIcon><CellsInsertIcon /></LargeIcon>
                    Insert
                    <CaretMark $mt={5} />
                </LargeBtn>
                <LargeBtn $w={36}>
                    <LargeIcon><CellsDeleteIcon /></LargeIcon>
                    Delete
                    <CaretMark $mt={5} />
                </LargeBtn>
                <LargeBtn $w={48}>
                    <LargeIcon><CellsFormatIcon /></LargeIcon>
                    Format
                    <CaretMark $mt={5} />
                </LargeBtn>
            </GroupBody>
            <GroupLabel>Cells</GroupLabel>
        </Group>

        <Group $w={187}>
            <GroupBody $left={6}>
                <Stack $top={3} $w={84}>
                    <ToolRow><Tool $w={20}><SigmaIcon /></Tool><ToolText>AutoSum</ToolText><CaretMark $ml={10} /></ToolRow>
                    <ToolRow><Tool $w={20}><FillDownIcon /></Tool><ToolText>Fill</ToolText><CaretMark $ml={3} /></ToolRow>
                    <ToolRow><Tool $w={20}><EraserIcon /></Tool><ToolText>Clear</ToolText><CaretMark $ml={3} /></ToolRow>
                </Stack>
                <LargeBtn $w={40}>
                    <LargeIcon><SortIcon /></LargeIcon>
                    Sort &amp;
                    <span>Filter<CaretMark $ml={3} /></span>
                </LargeBtn>
                <LargeBtn $w={58}>
                    <LargeIcon><FindIcon /></LargeIcon>
                    Find &amp;
                    <span>Select<CaretMark $ml={3} /></span>
                </LargeBtn>
            </GroupBody>
            <GroupLabel $shift={3}>Editing</GroupLabel>
        </Group>

        <RibbonEnd>
            <Ico w={9} h={6}><path d="M.5 5L4.5 1L8.5 5" stroke="#666" strokeWidth="1.3" /></Ico>
        </RibbonEnd>
    </Ribbon>
)

const Formula = () => (
    <FormulaBar>
        <NameBox>E15<CaretMark /></NameBox>
        <Grip>
            <Ico w={3} h={12}><path d="M0 0H2V2H0ZM0 5H2V7H0ZM0 10H2V12H0Z" fill="#b5b5b5" /></Ico>
        </Grip>
        <FxBox>
            <Ico w={14} h={14}><path d="M2 2L12 12M12 2L2 12" stroke="#c4c4c4" strokeWidth="1.5" /></Ico>
            <Ico w={14} h={14}><path d="M1 8L5 12L13 2" stroke="#c4c4c4" strokeWidth="1.8" /></Ico>
            <Glyph $serif $italic $bold $size={14} $color="#777">fx</Glyph>
        </FxBox>
        <FormulaInput><CaretMark /></FormulaInput>
    </FormulaBar>
)

const Sheet = () => (
    <SheetArea>
        <VScroll>
            <ScrollArrow $h={15}><ArrowUp /></ScrollArrow>
            <VThumb />
            <VTrack />
            <ScrollArrow $h={15}><ArrowDown /></ScrollArrow>
        </VScroll>
        <SheetGrid>
            <HeadRow>
                {HEADERS.map(h => <ColHead key={h || "H"} $on={h === "E"}>{h}</ColHead>)}
                <Corner><svg width="8" height="8"><path d="M8 0V8H0Z" fill="#b5b5b5" /></svg></Corner>
            </HeadRow>
            <TitleRow>
                <TitleCell>محاسبات تحلیل بازدهی سرمایه‌گذاری</TitleCell>
                <RowHead $center>1</RowHead>
            </TitleRow>
            {ROWS.map(row => <SheetRow key={row.n} row={row} />)}
        </SheetGrid>
    </SheetArea>
)

const SheetTabs = () => (
    <SheetBar>
        <HScroll>
            <ScrollArrow $w="14px"><ArrowSide left /></ScrollArrow>
            <HTrack />
            <HThumb />
            <ScrollArrow $w="14px"><ArrowSide /></ScrollArrow>
        </HScroll>
        <AddSheet>
            <Ico w={16} h={16}>
                <circle cx="8" cy="8" r="7" stroke="#777" strokeWidth="1.2" />
                <path d="M4 8H12M8 4V12" stroke="#777" strokeWidth="1.5" />
            </Ico>
        </AddSheet>
        <TabSep $ml={35} />
        <SheetTab $w={63} $shift={3}>Report</SheetTab>
        <SheetTab $w={99} $active $shift={4}>Calculations</SheetTab>
        <SheetTab $w={57} $shift={4}>Input</SheetTab>
        <TabSep />
        <TabNav>
            <ArrowSide left color="#c4c4c4" />
            <ArrowSide color="#c4c4c4" />
        </TabNav>
    </SheetBar>
)

const Status = () => (
    <StatusBar>
        <ReadyText>Ready</ReadyText>
        <Ico w={13} h={13}>
            <circle cx="3" cy="3" r="2.5" fill="#777" />
            <path d="M6 1H13V13H1V6" stroke="#888" />
            <path d="M3 8.5H11M3 11H11M5 6V13M8 6V13" stroke="#888" />
        </Ico>
        <Spacer $w={1003} />
        <ViewBtn $w={38} $on>
            <Ico w={14} h={12}><path d="M.5 .5H13.5V11.5H.5ZM.5 4H13.5M.5 8H13.5M5 .5V11.5M9.5 .5V11.5" stroke="#777" /></Ico>
        </ViewBtn>
        <ViewBtn $w={38}>
            <Ico w={12} h={12}><path d="M.5 .5H11.5V11.5H.5ZM3 3.5H9M3 6H9M3 8.5H9" stroke="#777" /></Ico>
        </ViewBtn>
        <ViewBtn $w={38}>
            <Ico w={14} h={12}><path d="M.5 11V.5H13.5V11M.5 8.5H13.5M7 .5V6" stroke="#777" /></Ico>
        </ViewBtn>
        <ZoomSign>-</ZoomSign>
        <ZoomSlider><ZoomThumb /></ZoomSlider>
        <ZoomSign>+</ZoomSign>
        <ZoomValue>85%</ZoomValue>
    </StatusBar>
)

export default function App() {
    return (
        <>
            <GlobalStyle />
            <Page>
                <RibbonTabs />
                <Home />
                <Formula />
                <Sheet />
                <SheetTabs />
                <Status />
            </Page>
        </>
    )
}
